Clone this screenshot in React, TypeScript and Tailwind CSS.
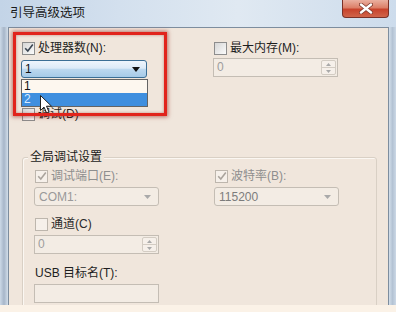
import React from 'react'

const sans = "font-['Liberation_Sans','Noto_Sans_CJK_SC',sans-serif]"

function Check({ checked = false, disabled = false }: { checked?: boolean; disabled?: boolean }) {
  return (
    <span
      className={
        disabled
          ? 'flex h-[13px] w-[13px] shrink-0 items-center justify-center border border-[#bdb6ad] bg-[#f6f0ea]'
          : 'flex h-[13px] w-[13px] shrink-0 items-center justify-center border border-[#8d8d8d] bg-gradient-to-br from-[#d6d6d6] to-[#fbfbfb]'
      }
    >
      {checked && (
        <svg width="10" height="10" viewBox="0 0 10 10">
          <path
            d="M1.2 5.2 L3.8 8 L8.8 1.5"
            fill="none"
            stroke={disabled ? '#aaa49d' : '#3b4653'}
            strokeWidth="1.6"
          />
        </svg>
      )}
    </span>
  )
}

function Combo({ value, dark = false }: { value: string; dark?: boolean }) {
  return (
    <div
      className={`flex h-[19px] w-[125px] items-center justify-between rounded-[3px] border border-[#c4bdb4] bg-[#f3ece4] pl-[4px] pr-[7px] ${
        dark ? 'text-[#7c7c7c]' : 'text-[#999999]'
      }`}
    >
      <span>{value}</span>
      <svg width="7" height="4" viewBox="0 0 7 4">
        <path d="M0 0 H7 L3.5 4 Z" fill="#a9a9a9" />
      </svg>
    </div>
  )
}

function Spin() {
  return (
    <div className="flex h-[19px] w-[125px] border border-[#c4bdb4] bg-[#f3ece4] p-[1px]">
      <span className="flex-1 pl-[2px] leading-[15px] text-[#9d9d9d]">0</span>
      <div className="flex w-[15px] flex-col rounded-[2px] border border-[#d3ccc3] bg-[#f6f0ea]">
        <div className="flex flex-1 items-center justify-center border-b border-[#d3ccc3]">
          <svg width="5" height="3" viewBox="0 0 5 3">
            <path d="M0 3 H5 L2.5 0 Z" fill="#a9a9a9" />
          </svg>
        </div>
        <div className="flex flex-1 items-center justify-center">
          <svg width="5" height="3" viewBox="0 0 5 3">
            <path d="M0 0 H5 L2.5 3 Z" fill="#a9a9a9" />
          </svg>
        </div>
      </div>
    </div>
  )
}

function CloseButton() {
  return (
    <div className="mr-[7px] flex h-[18px] w-[47px] items-center justify-center rounded-b-[4px] border border-t-0 border-[#7a3127] bg-[linear-gradient(to_bottom,#eab0a0_0%,#dc7f68_45%,#c8432c_55%,#d0654a_100%)]">
      <svg width="14" height="11" viewBox="0 0 14 11">
        <path d="M2 1.5 L12 9.5 M12 1.5 L2 9.5" stroke="#7d3a2e" strokeWidth="4" strokeLinecap="round" />
        <path d="M2 1.5 L12 9.5 M12 1.5 L2 9.5" stroke="#ffffff" strokeWidth="2.4" strokeLinecap="round" />
      </svg>
    </div>
  )
}

export default function App() {
  return (
    <div
      className={`relative h-[312px] w-[396px] overflow-hidden bg-[#fbf2e7] text-[12px] leading-[16px] text-[#1e1e1e] ${sans}`}
    >
      <div className="flex h-[305px] flex-col overflow-hidden bg-[linear-gradient(to_right,#c3d4e7_0%,#d3e0ee_30%,#e0e9f2_60%,#cddcec_100%)]">
        {/* title bar */}
        <div className="flex h-[27px] shrink-0 items-start justify-between">
          <span className="ml-[10px] mt-[5px] text-[12.5px] leading-[16px] text-[#1a1a1a]">引导高级选项</span>
          <CloseButton />
        </div>

        <div className="flex min-h-0 flex-1">
          <div className="w-[8px] shrink-0 bg-[linear-gradient(to_right,#ccd9e7,#a7b6c9_50%,#d2deea)]" />

          {/* client area */}
          <div className="min-w-0 flex-1 overflow-hidden border-x border-t border-[#7d8d9e] bg-[#f0e6dc] pl-[12px] pt-[12px]">
            <div className="flex">
              <div className="w-[192px] shrink-0">
                <div className="ml-[1px] flex h-[16px] items-center gap-[3px]">
                  <Check checked />
                  <span>处理器数(N):</span>
                </div>
                <div className="mt-[4px] flex h-[18px] w-[126px] items-center justify-between rounded-[3px] border border-[#3b6e95] bg-[linear-gradient(to_bottom,#eef5fc_0%,#dceaf7_45%,#bcd8ef_52%,#a6cae7_100%)] pl-[3px] pr-[6px] text-[#111]">
                  <span>1</span>
                  <svg width="8" height="5" viewBox="0 0 8 5">
                    <path d="M0 0 H8 L4 5 Z" fill="#111" />
                  </svg>
                </div>
              </div>
              <div>
                <div className="ml-[1px] flex h-[16px] items-center gap-[3px]">
                  <Check />
                  <span>最大内存(M):</span>
                </div>
                <div className="mt-[2px]">
                  <Spin />
                </div>
              </div>
            </div>

            <div className="ml-[1px] mt-[28px] flex h-[16px] items-center gap-[3px]">
              <Check />
              <span>调试(D)</span>
            </div>

            {/* group box */}
            <div className="relative ml-[1px] mt-[35px] h-[200px] w-[355px] rounded-[3px] border border-[#d9d0c5] pl-[11px] pt-[10px] shadow-[inset_1px_1px_0_#fbf7f2]">
              <span className="absolute left-[5px] top-[-9px] bg-[#f0e6dc] px-[2px] text-[#1a1a1a]">全局调试设置</span>
              <div className="flex">
                <div className="w-[180px] shrink-0">
                  <div className="ml-[1px] flex h-[16px] items-center gap-[3px] text-[#8e8e8e]">
                    <Check checked disabled />
                    <span>调试端口(E):</span>
                  </div>
                  <div className="mt-[3px]">
                    <Combo value="COM1:" />
                  </div>
                </div>
                <div>
                  <div className="ml-[1px] flex h-[16px] items-center gap-[3px] text-[#8e8e8e]">
                    <Check checked disabled />
                    <span>波特率(B):</span>
                  </div>
                  <div className="mt-[3px]">
                    <Combo value="115200" dark />
                  </div>
                </div>
              </div>

              <div className="ml-[1px] mt-[10px] flex h-[16px] items-center gap-[3px] text-[#2a2a2a]">
                <Check disabled />
                <span>通道(C)</span>
              </div>
              <div className="mt-[3px]">
                <Spin />
              </div>

              <div className="ml-[1px] mt-[11px] h-[16px]">USB 目标名(T):</div>
              <div className="mt-[3px] h-[19px] w-[125px] border border-[#c4bdb4] bg-[#f3ece4]" />
            </div>
          </div>

          <div className="w-[7px] shrink-0 bg-[linear-gradient(to_right,#d2deea,#b4c3d4_50%,#cbd8e6)]" />
        </div>
      </div>

      {/* open dropdown list */}
      <div className="absolute left-[21px] top-[79px] flex w-[127px] flex-col border border-[#646464] bg-[#fdf7ef]">
        <div className="h-[13px] pl-[2px] leading-[13px] text-[#111]">1</div>
        <div className="h-[13px] bg-[#3f8fdf] pl-[2px] leading-[13px] text-[#d9ecff]">2</div>
      </div>

      {/* mouse pointer */}
      <svg className="absolute left-[40px] top-[95px]" width="13" height="20" viewBox="0 0 13 20">
        <path
          d="M0.5 0.5 L0.5 15.5 L4 12 L6.6 18 L9 17 L6.5 11.2 L11.5 11.2 Z"
          fill="#ffffff"
          stroke="#222222"
          strokeWidth="1"
          strokeLinejoin="round"
        />
      </svg>

      {/* red annotation frame */}
      <div className="absolute left-[13px] top-[32px] h-[84px] w-[154px] border-[3px] border-[#e1241c] shadow-[0_0_4px_1px_rgba(140,20,10,0.55),inset_0_0_3px_rgba(140,20,10,0.45)]" />
    </div>
  )
}
